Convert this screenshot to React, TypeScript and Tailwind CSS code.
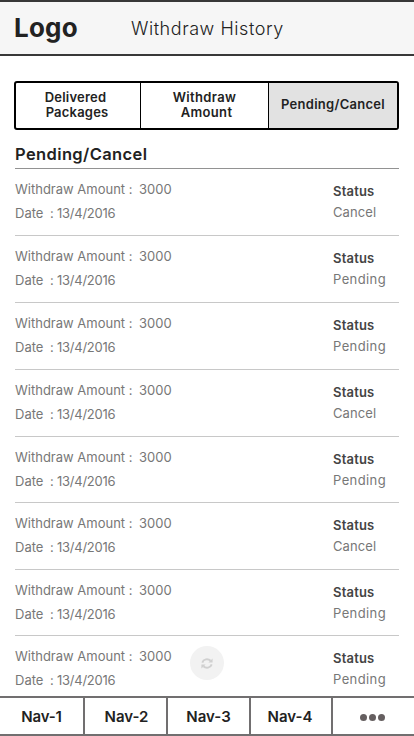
import { FaSync } from "react-icons/fa";

const rows = [
  { status: "Cancel", height: "h-[67px]" },
  { status: "Pending", height: "h-[67px]" },
  { status: "Pending", height: "h-[67px]" },
  { status: "Cancel", height: "h-[67px]" },
  { status: "Pending", height: "h-[66px]" },
  { status: "Cancel", height: "h-[67px]" },
  { status: "Pending", height: "h-[66px]" },
  { status: "Pending", height: "h-[60px]" },
];

function Row({ status, height, last }: { status: string; height: string; last: boolean }) {
  return (
    <li className={`${height} flex justify-between ${last ? "" : "border-b border-[#c8c8c8]"}`}>
      <div className="pt-2 text-[13px] leading-6 text-[#777] whitespace-nowrap">
        <div className="flex">
          <span className="w-[124px]">Withdraw Amount :</span>
          <span className="tracking-[0.05px]">3000</span>
        </div>
        <div className="flex">
          <span className="w-[35px]">Date</span>
          <span className="w-[7px]">:</span>
          <span className="tracking-[-0.25px]">13/4/2016</span>
        </div>
      </div>
      <div className="w-[66px] pt-3 text-[13px] leading-[21px]">
        <div className="font-semibold text-[#444] tracking-[0.2px]">Status</div>
        <div className={`text-[#777] ${status === "Cancel" ? "tracking-[0.1px]" : "tracking-[0.4px]"}`}>{status}</div>
      </div>
    </li>
  );
}

export default function App() {
  return (
    <div className="relative flex h-[736px] w-[414px] flex-col overflow-hidden bg-white font-['Inter',sans-serif] text-[#222]">
      <header className="flex h-14 shrink-0 items-center border-y-2 border-[#383838] bg-[#f6f6f6] pl-[14px] whitespace-nowrap">
        <div className="w-[117px] text-[26px] leading-8 font-bold tracking-[0.2px]">Logo</div>
        <h1 className="pt-0.5 text-[18px] leading-6 font-light tracking-[0.55px]">Withdraw History</h1>
      </header>
      <main className="flex min-h-0 flex-1 flex-col pt-[25px] pr-[15px] pl-[14px]">
        <div className="grid h-[49px] shrink-0 grid-cols-[124px_128px_129px] rounded-[3px] border-2 border-black text-[13px] leading-[15px] font-semibold whitespace-nowrap">
          <button className="pb-0.5 text-center tracking-[0.2px]">
            <span className="block -ml-[5px]">Delivered</span>
            <span className="block -ml-0.5">Packages</span>
          </button>
          <button className="border-l border-black pb-0.5 text-center tracking-[0.35px]">
            <span className="block">Withdraw</span>
            <span className="block ml-1">Amount</span>
          </button>
          <button className="border-l border-black bg-[#e2e2e2] pb-0.5 tracking-[0.28px]">Pending/Cancel</button>
        </div>
        <section className="pl-px">
          <h2 className="h-[39px] border-b border-[#929292] pt-[14px] text-[16.5px] leading-[21px] font-semibold tracking-[0.38px]">Pending/Cancel</h2>
          <ul>
            {rows.map((r, i) => (
              <Row key={i} status={r.status} height={r.height} last={i === rows.length - 1} />
            ))}
          </ul>
        </section>
      </main>
      <button aria-label="Refresh" className="absolute top-[646px] left-[190px] flex size-[34px] items-center justify-center rounded-full bg-[#f2f2f2]">
        <svg viewBox="0 0 12 11" className="h-[11px] w-3 text-[#d0d0d0]" fill="none" stroke="currentColor" strokeWidth="1.9">
          <path d="M1.3 4.6C2.4 1 7 .3 9.6 2.8M10.7 6.4C9.6 10 5 10.7 2.4 8.2" />
          <path d="M11.6.4V4.6H7.4zM.4 10.6V6.4H4.6z" fill="currentColor" stroke="none" />
        </svg>
      </button>
      <nav className="z-10 grid h-10 shrink-0 grid-cols-[83px_83px_83px_82px_83px] border-y-2 border-[#716f70] bg-white text-[15px] font-semibold">
        <a className="flex items-center justify-center pt-0.5 tracking-[-0.2px]">Nav-1</a>
        <a className="flex items-center justify-center border-l-2 border-[#716f70] pt-0.5 pl-0.5">Nav-2</a>
        <a className="flex items-center justify-center border-l-2 border-[#716f70] pt-0.5">Nav-3</a>
        <a className="flex items-center justify-center border-l-2 border-[#716f70] pt-0.5 pr-0.5">Nav-4</a>
        <a className="flex items-center justify-center gap-0.5 border-l-2 border-[#716f70] pt-0.5 pr-0.5">
          <i className="size-[7px] rounded-full bg-[#655f60]" />
          <i className="size-[7px] rounded-full bg-[#655f60]" />
          <i className="size-[7px] rounded-full bg-[#655f60]" />
        </a>
      </nav>
    </div>
  );
}
